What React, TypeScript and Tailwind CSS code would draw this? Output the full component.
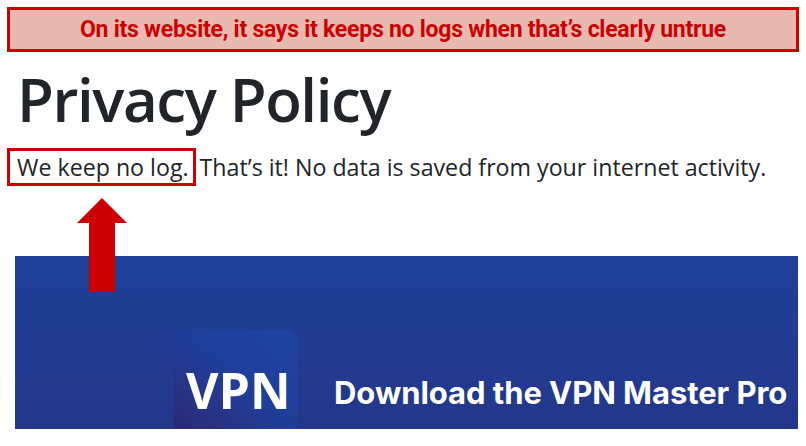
import React from "react";

export default function App() {
  return (
    <div className="relative w-[806px] h-[446px] bg-white overflow-hidden" style={{ fontFamily: "'Open Sans', sans-serif" }}>
      {/* Annotation banner */}
      <div className="mx-[7px] mt-[7px] h-[45px] border-[3px] border-[#cc0000] bg-[#e8b9b1] flex items-center justify-center pt-[2px]">
        <span className="text-[#cc0000] font-bold text-[23px] tracking-[-0.25px]" style={{ fontFamily: "Roboto, 'Liberation Sans', sans-serif" }}>
          On its website, it says it keeps no logs when that’s clearly untrue
        </span>
      </div>

      {/* Heading */}
      <h1 className="mt-[11px] ml-[17px] text-[60px] leading-[72px] font-semibold text-[#212529] tracking-[-1.4px]">
        Privacy Policy
      </h1>

      {/* Body line */}
      <div className="mt-[13px] ml-[7px] flex items-center text-[23.2px] leading-[32px] text-[#212529]">
        <span className="border-[3px] border-[#cc0000] pl-[7px] pr-[4px] h-[38px] flex items-center">We keep no log.</span>
        <span className="ml-[4px]">That’s it! No data is saved from your internet activity.</span>
      </div>

      {/* Blue promo panel */}
      <div className="absolute left-[15px] top-[256px] w-[783px] h-[173px] bg-gradient-to-b from-[#1f4099] to-[#23378b] flex items-end pl-[159px]">
        <div className="relative w-[123px] h-[99px] rounded-t-[10px] bg-gradient-to-tr from-[#2b2974] via-[#1f3e9a] to-[#1e44a1]">
          <span className="absolute left-[12px] top-[30px] text-white font-bold text-[50px] leading-[60px]">VPN</span>
        </div>
        <span className="ml-[37px] mb-[16px] text-white font-bold text-[31px] leading-[40px] tracking-[-0.05px] whitespace-nowrap" style={{ fontFamily: "Inter, 'Open Sans', sans-serif" }}>
          Download the VPN Master Pro
        </span>
      </div>

      {/* Red up arrow (annotation overlay) */}
      <svg className="absolute left-[76px] top-[197px]" width="52" height="96" viewBox="0 0 52 96">
        <polygon points="26,1 51,26 39,26 39,95 13,95 13,26 1,26" fill="#cc0000" />
      </svg>
    </div>
  );
}
